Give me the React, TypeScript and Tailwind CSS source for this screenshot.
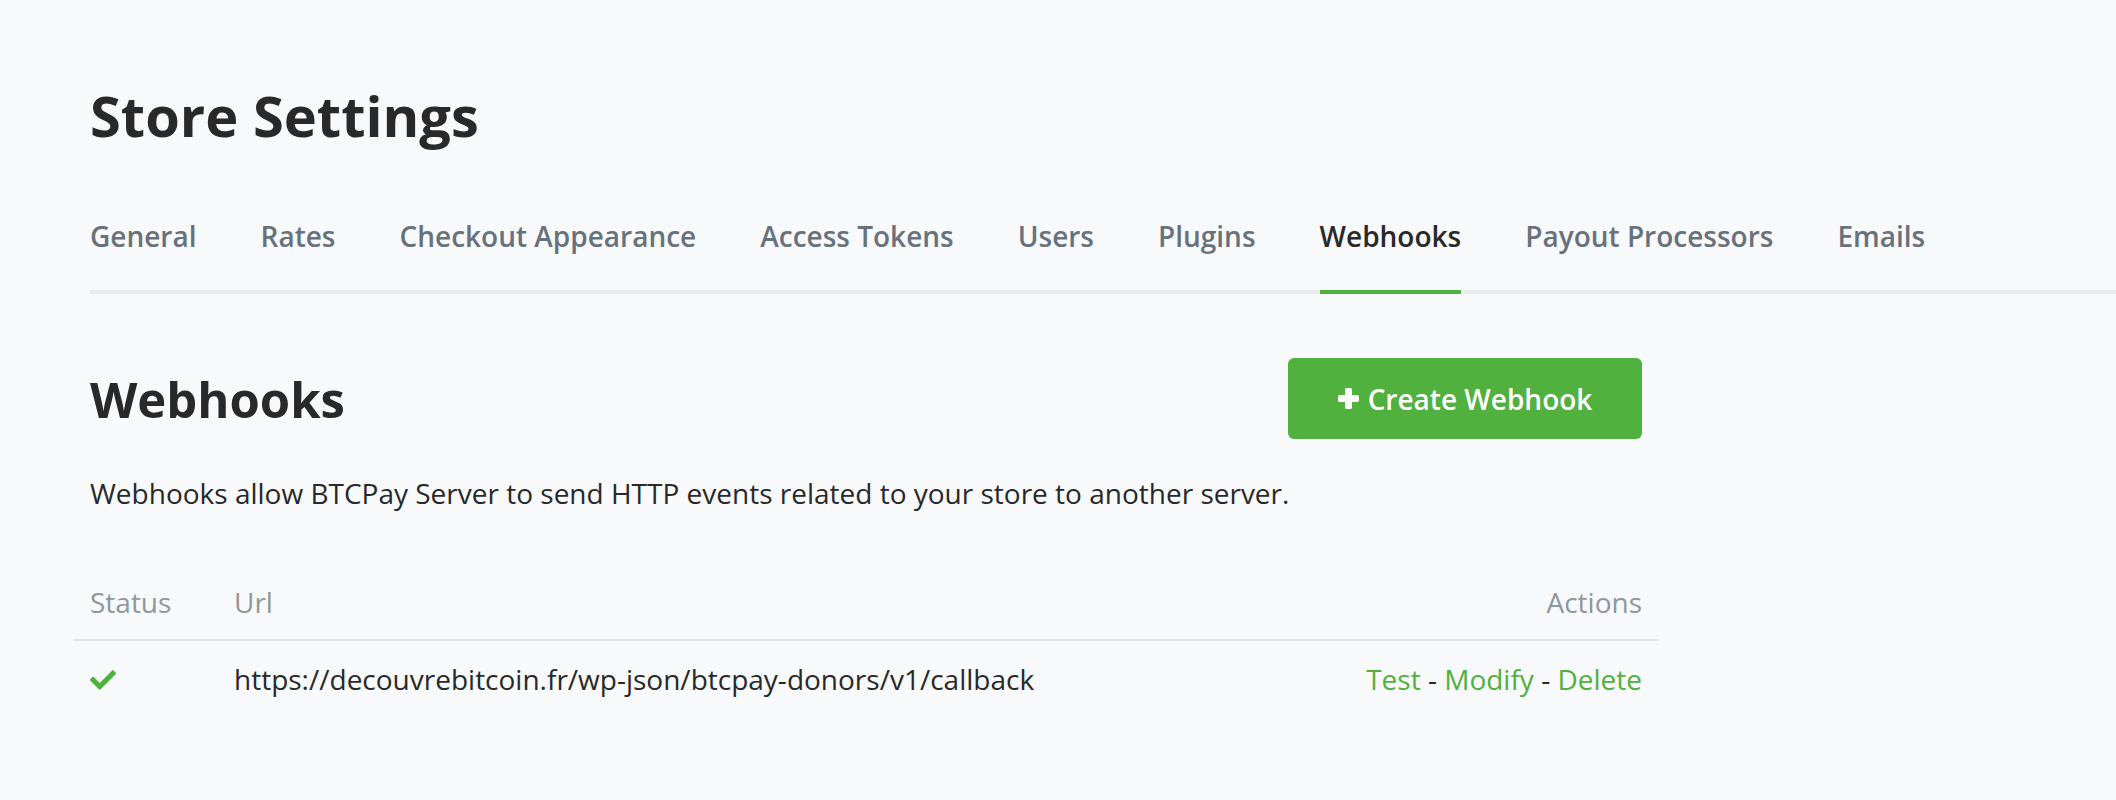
import React from "react";
import { FaCheck } from "react-icons/fa";

const tabs = [
  "General",
  "Rates",
  "Checkout Appearance",
  "Access Tokens",
  "Users",
  "Plugins",
  "Webhooks",
  "Payout Processors",
  "Emails",
];

function PlusIcon() {
  return (
    <svg width="21" height="21" viewBox="0 0 21 21" aria-hidden="true">
      <rect x="7" y="0" width="7" height="21" rx="1.6" fill="#ffffff" />
      <rect x="0" y="7" width="21" height="7" rx="1.6" fill="#ffffff" />
    </svg>
  );
}

export default function App() {
  return (
    <div className="min-h-screen bg-[#f8f9fa] font-['Open_Sans',sans-serif] text-[#292929]">
      <div className="pl-[90px] pt-[81px]">
        <h1 className="text-[56px] leading-[68px] font-bold text-[#292929]">Store Settings</h1>

        <nav className="mt-[66px] flex gap-[64px] border-b-4 border-[#e9ebed]">
          {tabs.map((t) => {
            const active = t === "Webhooks";
            return (
              <a
                key={t}
                href="#"
                className={
                  active
                    ? "-mb-[4px] border-b-4 border-[#51b13e] pb-[33px] text-[28px] leading-[42px] font-semibold text-[#292929]"
                    : "-mb-[4px] border-b-4 border-transparent pb-[33px] text-[28px] leading-[42px] font-semibold text-[#67727d]"
                }
              >
                {t}
              </a>
            );
          })}
        </nav>

        <div className="w-[1552px]">
          <div className="mt-[64px] flex items-center justify-between">
            <h2 className="text-[49px] leading-[60px] font-bold text-[#292929]">Webhooks</h2>
            <button className="flex h-[81px] w-[354px] items-center justify-center gap-[9px] rounded-[6px] bg-[#51b13e] text-[28px] leading-[42px] font-semibold text-white">
              <PlusIcon />
              <span>Create Webhook</span>
            </button>
          </div>

          <p className="mt-[33px] text-[28px] leading-[42px] text-[#292929]">
            Webhooks allow BTCPay Server to send HTTP events related to your store to another server.
          </p>

          <table className="-mx-4 mt-[51px] w-[1584px] border-collapse text-[28px] leading-[42px]">
            <thead>
              <tr>
                <th className="w-[144px] border-b-2 border-[#e1e4e8] px-4 py-4 text-left font-normal text-[#8f979e]">
                  Status
                </th>
                <th className="border-b-2 border-[#e1e4e8] px-4 py-4 text-left font-normal text-[#8f979e]">
                  Url
                </th>
                <th className="border-b-2 border-[#e1e4e8] px-4 py-4 text-right font-normal text-[#8f979e]">
                  Actions
                </th>
              </tr>
            </thead>
            <tbody>
              <tr>
                <td className="px-4 pt-[17px] pb-4 align-middle">
                  <FaCheck className="mt-[2px] h-[26px] w-[26px] text-[#51b13e]" />
                </td>
                <td className="px-4 pt-[17px] pb-4 text-[#292929]">
                  https://decouvrebitcoin.fr/wp-json/btcpay-donors/v1/callback
                </td>
                <td className="px-4 pt-[17px] pb-4 text-right text-[#292929]">
                  <a href="#" className="text-[#51b13e]">Test</a>
                  {" - "}
                  <a href="#" className="text-[#51b13e]">Modify</a>
                  {" - "}
                  <a href="#" className="text-[#51b13e]">Delete</a>
                </td>
              </tr>
            </tbody>
          </table>
        </div>
      </div>
    </div>
  );
}
